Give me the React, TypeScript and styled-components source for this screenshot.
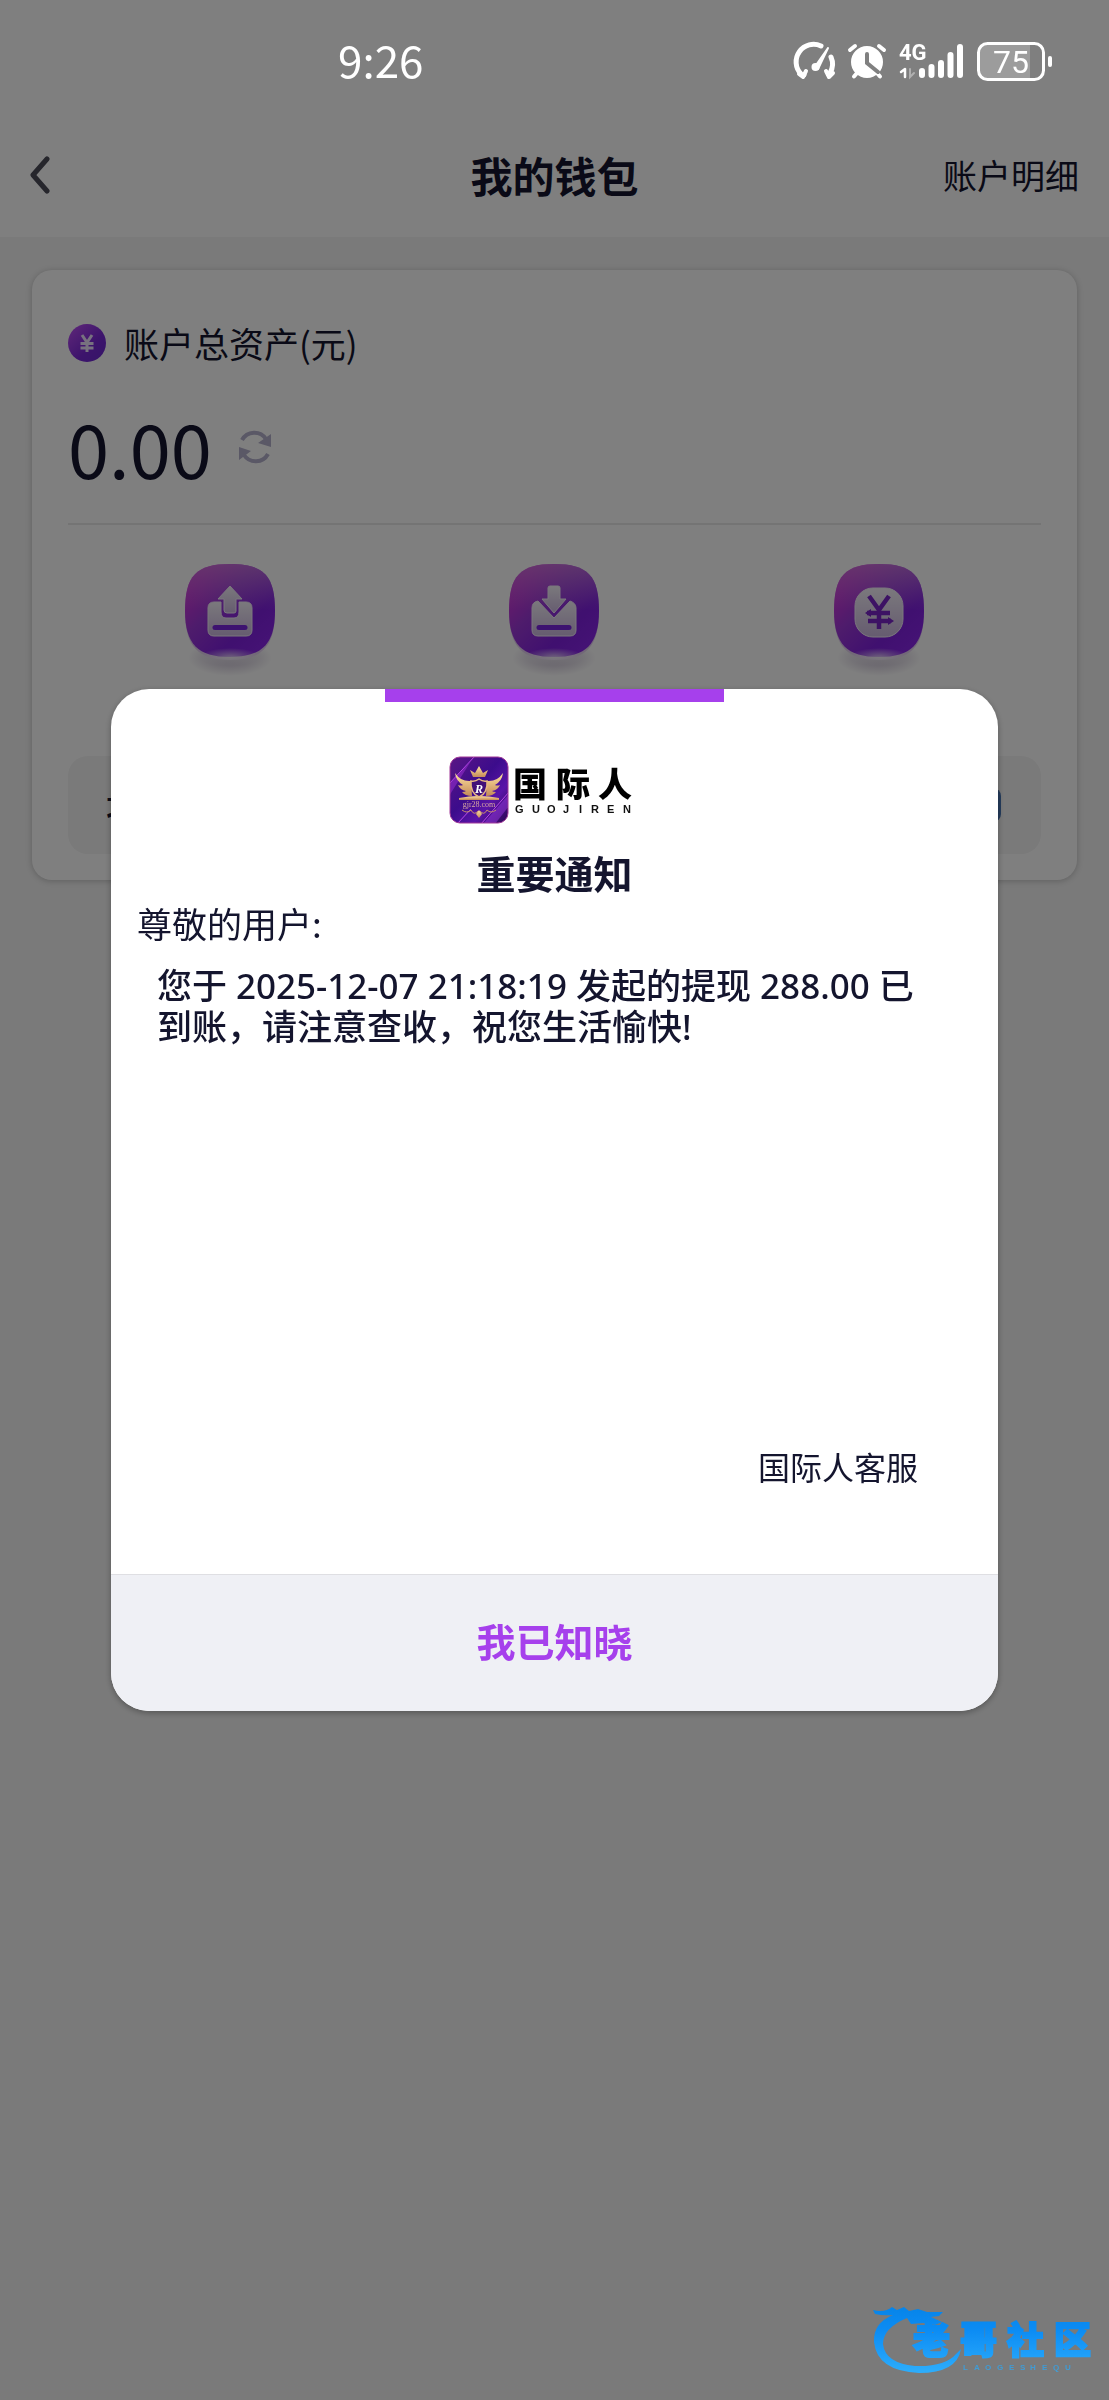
import React from "react";
import styled, { createGlobalStyle } from "styled-components";

const ink = "#14152e";
const accent = "#a640ec";

const GlobalStyle = createGlobalStyle`
  * { box-sizing: border-box; }
  body {
    margin: 0;
    background: #f4f4f4;
    color: ${ink};
    font-family: "Noto Sans CJK SC", "Noto Sans", sans-serif;
    font-weight: 400;
  }
  button { font: inherit; color: inherit; border: 0; background: none; padding: 0; cursor: pointer; }
  h1, h2, p { margin: 0; }
`;

const Page = styled.div`
  position: relative;
  min-height: 100vh;
  background: #f4f4f4;
`;

const StatusBar = styled.div`
  position: relative;
  z-index: 3;
  display: flex;
  align-items: center;
  justify-content: space-between;
  height: 118px;
  padding: 0 57px 0 338px;
  color: #fff;
  font-size: 44px;
  line-height: 48px;
`;

const StatusIcons = styled.div`
  display: flex;
  align-items: center;
`;

const TopArea = styled.div`
  background: #fff;
`;

const Header = styled.header`
  display: grid;
  grid-template-columns: 1fr auto 1fr;
  align-items: center;
  height: 119px;
  padding: 0 30px 6px;
`;

const IconButton = styled.button`
  justify-self: start;
  display: flex;
`;

const PageTitle = styled.h1`
  font-size: 42px;
  line-height: 60px;
  font-weight: 700;
`;

const DetailLink = styled.a`
  justify-self: end;
  color: inherit;
  text-decoration: none;
  font-size: 34px;
  line-height: 48px;
`;

const Card = styled.section`
  margin: 33px 32px 0;
  padding: 48px 36px 26px;
  border-radius: 20px;
  background: #fff;
  box-shadow: 0 1px 6px rgba(0, 0, 0, 0.22);
`;

const AssetLabel = styled.div`
  display: flex;
  align-items: center;
  gap: 18px;
  font-size: 35px;
  line-height: 50px;
`;

const AssetValue = styled.div`
  display: flex;
  align-items: center;
  gap: 26px;
  height: 157px;
  padding-top: 2px;
  border-bottom: 2px solid #e9e9e9;
  font-size: 74px;
  line-height: 76px;
`;

const Actions = styled.div`
  display: grid;
  grid-template-columns: repeat(3, 1fr);
  margin-top: 31px;
`;

const ActionButton = styled.button`
  display: flex;
  flex-direction: column;
  align-items: center;
  gap: 8px;
  height: 200px;
  font-size: 34px;
  line-height: 48px;
`;

const VenueRow = styled.div`
  display: flex;
  align-items: center;
  justify-content: space-between;
  height: 98px;
  padding: 0 40px 0 38px;
  border-radius: 20px;
  background: #f4f4f4;
  font-size: 34px;
  line-height: 48px;
  font-weight: 500;
`;

const VenueBadge = styled.span`
  width: 36px;
  height: 34px;
  border-radius: 8px;
  background: #4a78b8;
`;

const Overlay = styled.div`
  position: fixed;
  inset: 0;
  z-index: 2;
  display: flex;
  align-items: center;
  justify-content: center;
  background: rgba(0, 0, 0, 0.5);
`;

const Dialog = styled.section`
  display: flex;
  flex-direction: column;
  align-items: stretch;
  width: 80%;
  overflow: hidden;
  border-radius: 38px;
  background: #fff;
  box-shadow: 0 2px 6px rgba(0, 0, 0, 0.3);
`;

const AccentBar = styled.div`
  align-self: center;
  width: 339px;
  height: 13px;
  background: ${accent};
`;

const DialogBody = styled.div`
  display: flex;
  flex-direction: column;
  min-height: 872px;
  padding: 54px 26px 84px;
`;

const Brand = styled.div`
  display: flex;
  justify-content: center;
  padding-right: 28px;
`;

const DialogTitle = styled.h2`
  margin-top: 18px;
  text-align: center;
  font-size: 39px;
  line-height: 60px;
  font-weight: 700;
`;

const Greeting = styled.p`
  font-size: 35px;
  line-height: 41px;
`;

const Message = styled.p`
  margin-top: 22px;
  padding: 0 48px 0 20px;
  font-family: "Noto Sans", "Noto Sans CJK SC", sans-serif;
  font-size: 35px;
  line-height: 41px;
  font-weight: 500;
`;

const Signature = styled.p`
  margin-top: auto;
  padding-right: 54px;
  text-align: right;
  font-size: 32px;
  line-height: 48px;
`;

const ConfirmButton = styled.button`
  height: 137px;
  padding-bottom: 6px;
  border-top: 1px solid #dfdfe3;
  background: #eff0f5;
  color: ${accent};
  font-size: 39px;
  line-height: 56px;
  font-weight: 700;
`;

const Watermark = styled.div`
  position: fixed;
  right: 12px;
  bottom: 24px;
  z-index: 4;
  display: flex;
`;

const SystemIcons = () => (
  <svg width="264" height="48" viewBox="787 35 264 48" fill="none" stroke="#fff" strokeLinecap="round">
    <path d="M803 75 l-3 -1 A17.500 17.500 0 0 1 820 46" strokeWidth="5" />
    <path d="M798 74 l4 3 l3 -6 M825 71 l3 6 l4 -4" strokeWidth="4" strokeLinejoin="round" />
    <path d="M830 57 A17.500 17.500 0 0 1 829 73" strokeWidth="5" />
    <path d="M813 68 L827 48 L817 69 Z" fill="#fff" strokeWidth="2" strokeLinejoin="round" />
    <circle cx="814.500" cy="67" r="4" fill="#fff" stroke="none" />
    <circle cx="866" cy="62" r="15" fill="#fff" strokeWidth="2" />
    <path d="M849 50 l5 -4 M883 50 l-5 -4 M856 73 l-3 3.500 M876 73 l3 3.500" strokeWidth="4" />
    <path d="M866 54 V63 L877 72" stroke="#808080" strokeWidth="4" />
    <text x="898" y="60" fill="#fff" stroke="none" fontFamily="Roboto, sans-serif" fontSize="22" fontWeight="700">4G</text>
    <path d="M900 72 l4 -3 V77" strokeWidth="2.500" strokeLinejoin="round" />
    <path d="M909 69 V77 l4 -4" stroke="#b0b0b0" strokeWidth="2" />
    <path d="M921 71 V75 M930.500 67 V75 M940 63 V75 M949.500 55 V75 M959 47 V75" strokeWidth="6" />
    <path d="M984 44 H1029 V79 H984 Q978 77 978 70 V52 Q978 45 984 44Z" fill="#9c9c9c" stroke="none" />
    <rect x="977.500" y="43.500" width="65" height="36" rx="9" strokeWidth="3" />
    <path d="M1049 58 V65" strokeWidth="4" />
    <text x="1010" y="73" textAnchor="middle" fill="#fff" stroke="none" fontFamily="Roboto, sans-serif" fontSize="32">75</text>
  </svg>
);

const YenCoin = () => (
  <svg width="38" height="38" viewBox="0 0 38 38">
    <defs>
      <linearGradient id="coin" x1="0" y1="0" x2="1" y2="1">
        <stop offset="0" stopColor="#c050f4" />
        <stop offset="0.600" stopColor="#7a28d8" />
        <stop offset="1" stopColor="#6a28d0" />
      </linearGradient>
    </defs>
    <circle cx="19" cy="19" r="19" fill="url(#coin)" />
    <path d="M14 11 L19 18.500 L24 11 M19 18 V28 M12.500 19.500 H25.500 M12.500 24 H25.500" fill="none" stroke="#efe4ff" strokeWidth="3" />
  </svg>
);

const Refresh = () => (
  <svg width="34" height="34" viewBox="0 0 34 34" fill="none" stroke="#b4b0cc" strokeWidth="4">
    <path d="M4 10 A14 14 0 0 1 28 9" />
    <path d="M30 24 A14 14 0 0 1 6 25" />
    <path d="M33 4 V17 L20 13 Z M1 30 V17 L13 21 Z" fill="#b4b0cc" stroke="none" />
  </svg>
);

const glyphs: Record<string, React.ReactNode> = {
  out: (
    <>
      <path d="M30 38 H37 V48 Q37 54 42 54 H50 Q55 54 55 48 V38 H62 Q68 38 68 44 V66 Q68 72 62 72 H30 Q24 72 24 66 V44 Q24 38 30 38Z" fill="url(#plate)" stroke="#f4eefa" strokeWidth="1" />
      <path d="M46 22 L58 35 H52 V47 Q52 49 50 49 H43 Q40 49 40 46 V35 H34 Z" fill="url(#plate)" stroke="#f4eefa" strokeWidth="1" strokeLinejoin="round" />
      <path d="M31 63.500 H61" stroke="#7a24e0" strokeWidth="5" strokeLinecap="round" />
    </>
  ),
  in: (
    <>
      <path d="M30 37 L46 54 L62 37 Q68 39 68 44 V66 Q68 72 62 72 H30 Q24 72 24 66 V44 Q24 38 30 37Z" fill="url(#plate)" stroke="#f4eefa" strokeWidth="1" />
      <path d="M42 22 H50 Q52 22 52 24 V35 H58 L46 49 L34 35 H40 V24 Q40 22 42 22Z" fill="url(#plate)" stroke="#f4eefa" strokeWidth="1" strokeLinejoin="round" />
      <path d="M31 63.500 H61" stroke="#7a24e0" strokeWidth="5" strokeLinecap="round" />
    </>
  ),
  yen: (
    <>
      <rect x="22" y="24" width="48" height="49" rx="18" fill="url(#plate)" stroke="#f4eefa" strokeWidth="1" />
      <path d="M36 32 L46 46 L56 32 M46 45 V65 M34 49 H57 M35 57 H58" fill="none" stroke="#7a24c8" strokeWidth="4.500" />
      <path d="M38 45 L32 49 L38 53 Z M55 53 L61 57 L55 61 Z" fill="#7a24c8" />
    </>
  ),
};

const ActionIcon = ({ name }: { name: string }) => (
  <svg width="120" height="122" viewBox="-14 -8 120 122">
    <defs>
      <linearGradient id="tile" x1="0" y1="0.300" x2="0.700" y2="1">
        <stop offset="0" stopColor="#d034d8" />
        <stop offset="0.350" stopColor="#9c38d8" />
        <stop offset="0.750" stopColor="#8020e0" />
        <stop offset="1" stopColor="#8824e8" />
      </linearGradient>
      <linearGradient id="sheen" x1="0" y1="0" x2="0" y2="1">
        <stop offset="0" stopColor="#cc80dc" stopOpacity="0.700" />
        <stop offset="0.500" stopColor="#b070e0" stopOpacity="0" />
      </linearGradient>
      <linearGradient id="plate" x1="0" y1="0" x2="0" y2="1">
        <stop offset="0" stopColor="#f6f2fa" />
        <stop offset="1" stopColor="#ccb8e0" />
      </linearGradient>
      <radialGradient id="glow">
        <stop offset="0" stopColor="#fff" stopOpacity="0.700" />
        <stop offset="1" stopColor="#fff" stopOpacity="0" />
      </radialGradient>
      <radialGradient id="shade">
        <stop offset="0" stopColor="#a898b8" stopOpacity="0.700" />
        <stop offset="1" stopColor="#a898b8" stopOpacity="0" />
      </radialGradient>
    </defs>
    <ellipse cx="46" cy="94" rx="42" ry="18" fill="url(#shade)" />
    <path d="M46 1 C80 1 91 12 91 48 C91 82 78 96 46 96 C14 96 1 82 1 48 C1 12 12 1 46 1Z" fill="#e4d0f0" />
    <path d="M46 0 C80 0 91 12 91 47 C91 80 78 93 46 93 C14 93 1 80 1 47 C1 12 12 0 46 0Z" fill="url(#tile)" />
    <path d="M46 0 C80 0 91 12 91 47 C91 80 78 93 46 93 C14 93 1 80 1 47 C1 12 12 0 46 0Z" fill="url(#sheen)" />
    <ellipse cx="46" cy="93" rx="30" ry="9" fill="url(#glow)" />
    {glyphs[name]}
  </svg>
);

const BrandLogo = () => (
  <svg width="184" height="68" viewBox="0 0 184 68">
    <defs>
      <linearGradient id="badge" x1="0" y1="0" x2="1" y2="1">
        <stop offset="0" stopColor="#5a1684" />
        <stop offset="0.450" stopColor="#3c0c8c" />
        <stop offset="0.700" stopColor="#5a14a8" />
        <stop offset="1" stopColor="#2a0850" />
      </linearGradient>
      <linearGradient id="gold" x1="0" y1="0" x2="0" y2="1">
        <stop offset="0" stopColor="#ffe2a0" />
        <stop offset="1" stopColor="#c48a58" />
      </linearGradient>
      <clipPath id="badgeClip"><rect x="1" y="1" width="58" height="66" rx="10" /></clipPath>
    </defs>
    <rect x="1" y="1" width="58" height="66" rx="10" fill="url(#badge)" />
    <g clipPath="url(#badgeClip)">
      <path d="M0 28 L26 0 M32 68 L60 36 M8 68 L22 53" stroke="#b848e8" strokeWidth="1" />
      <path d="M0 40 L0 28 L22 5 Z" fill="#a030d8" opacity="0.500" />
      <path d="M34 68 L60 38 V50 L46 68Z" fill="#9838e0" opacity="0.500" />
    </g>
    <rect x="1" y="1" width="58" height="66" rx="10" fill="none" stroke="#a03898" />
    <g fill="url(#gold)">
      <path d="M24 21 L21 14 L26 17 L30 10 L34 17 L39 14 L36 21 Z" />
      <path d="M6 17 Q12 26 22 25 L23 40 Q16 40 13 36 Q16 36 17 35 Q11 34 9 29 Q12 30 14 29 Q7 25 6 17Z" />
      <path d="M54 17 Q48 26 38 25 L37 40 Q44 40 47 36 Q44 36 43 35 Q49 34 51 29 Q48 30 46 29 Q53 25 54 17Z" />
      <path d="M10 42 Q30 38 50 42 V44 H10Z" />
      <path d="M30 54 L33 58 L30 62 L27 58 Z" />
    </g>
    <path d="M30 23 Q34 26 38 25 Q39 37 30 41 Q21 37 22 25 Q26 26 30 23Z" fill="#421078" stroke="#e8b880" strokeWidth="1.500" />
    <path d="M13 54 Q18 58 22 54 Q25 60 29 55 M47 54 Q42 58 38 54 Q35 60 31 55" fill="none" stroke="#c8906c" strokeWidth="1" />
    <text x="30" y="37" textAnchor="middle" fontFamily="Liberation Serif, serif" fontStyle="italic" fontWeight="700" fontSize="12" fill="#fff">R</text>
    <text x="30" y="51" textAnchor="middle" fontFamily="Liberation Serif, serif" fontSize="8" fill="#d8a8a0">gjr28.com</text>
    <text x="64 107 149" y="41" fontFamily="Noto Sans CJK SC, sans-serif" fontWeight="900" fontSize="34" fill="#000">国际人</text>
    <text x="66 83 98 114 130 142 158 174" y="57" fontFamily="Liberation Sans, sans-serif" fontWeight="700" fontSize="11" fill="#111">GUOJIREN</text>
  </svg>
);

const CommunityLogo = () => (
  <svg width="224" height="70" viewBox="0 0 224 70">
    <defs>
      <linearGradient id="blue" gradientUnits="userSpaceOnUse" x1="0" y1="0" x2="0" y2="70">
        <stop offset="0" stopColor="#0684e8" />
        <stop offset="0.350" stopColor="#0c8cf4" />
        <stop offset="1" stopColor="#30b0fc" />
      </linearGradient>
    </defs>
    <g fill="url(#blue)">
      <path d="M0 4 Q12 7 19 1 L24 4 L31 1 L36 5 L45 3 L54 6 L70 6 L66 10 L58 11 L69 16 L62 19 L50 17 L38 18 L34 12 Q10 22 10 38 Q12 57 42 60 Q72 61 83 48 L88 43 Q84 67 46 67 Q4 65 1 36 Q0 17 20 9 Q10 10 2 8Z" />
      <text x="40 87 134 181" y="48" fontFamily="Noto Sans CJK SC, sans-serif" fontWeight="900" fontSize="37" stroke="url(#blue)" strokeWidth="2">老哥社区</text>
      <text x="90 101 112 124 136 147 157 169 180 192" y="64" fontFamily="Liberation Sans, sans-serif" fontWeight="700" fontSize="8" opacity="0.700">LAOGESHEQU</text>
    </g>
  </svg>
);

const actions = [
  { icon: "out", label: "提现" },
  { icon: "in", label: "充值" },
  { icon: "yen", label: "转账" },
];

export default function App() {
  return (
    <Page>
      <GlobalStyle />
      <TopArea>
        <StatusBar>
          <time>9:26</time>
          <StatusIcons><SystemIcons /></StatusIcons>
        </StatusBar>
        <Header>
          <IconButton type="button" aria-label="返回">
            <svg width="20" height="38" viewBox="0 0 20 38" fill="none" stroke="#4c4c58" strokeWidth="5" strokeLinecap="round" strokeLinejoin="round">
              <path d="M17 3 L3 19 L17 35" />
            </svg>
          </IconButton>
          <PageTitle>我的钱包</PageTitle>
          <DetailLink href="#detail">账户明细</DetailLink>
        </Header>
      </TopArea>
      <Card>
        <AssetLabel><YenCoin />账户总资产(元)</AssetLabel>
        <AssetValue>
          <span>0.00</span>
          <IconButton type="button" aria-label="刷新"><Refresh /></IconButton>
        </AssetValue>
        <Actions>
          {actions.map((a) => (
            <ActionButton type="button" key={a.icon}>
              <ActionIcon name={a.icon} />
              {a.label}
            </ActionButton>
          ))}
        </Actions>
        <VenueRow>场馆余额<VenueBadge /></VenueRow>
      </Card>

      <Overlay>
        <Dialog role="dialog" aria-modal="true" aria-labelledby="notice-title">
          <AccentBar />
          <DialogBody>
            <Brand><BrandLogo /></Brand>
            <DialogTitle id="notice-title">重要通知</DialogTitle>
            <Greeting>尊敬的用户:</Greeting>
            <Message>您于 2025-12-07 21:18:19 发起的提现 288.00 已到账，请注意查收，祝您生活愉快!</Message>
            <Signature>国际人客服</Signature>
          </DialogBody>
          <ConfirmButton type="button">我已知晓</ConfirmButton>
        </Dialog>
      </Overlay>

      <Watermark><CommunityLogo /></Watermark>
    </Page>
  );
}
